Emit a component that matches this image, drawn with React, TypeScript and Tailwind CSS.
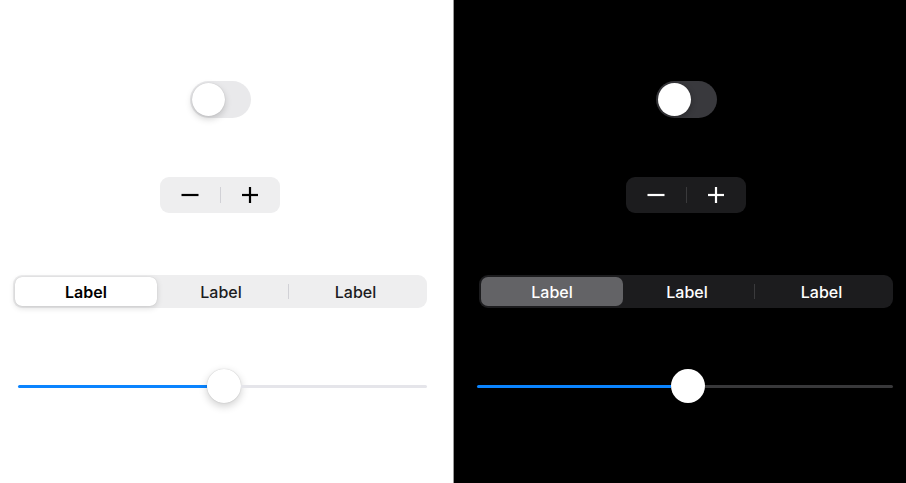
import React from 'react';

type Theme = 'light' | 'dark';

function Toggle({ theme }: { theme: Theme }) {
    const dark = theme === 'dark';
    return (
        <div className={`w-[61px] h-[37px] rounded-full flex items-center px-[2px] ${dark ? 'bg-[#39393d]' : 'bg-[#e9e9eb]'}`}>
            <div
                className={`w-[33px] h-[33px] rounded-full bg-white ${
                    dark ? 'shadow-[0_2px_6px_rgba(0,0,0,0.3)]' : 'shadow-[0_3px_7px_rgba(0,0,0,0.18),0_0_1px_rgba(0,0,0,0.2)]'
                }`}
            />
        </div>
    );
}

function Stepper({ theme }: { theme: Theme }) {
    const dark = theme === 'dark';
    const stroke = dark ? '#ffffff' : '#000000';
    return (
        <div className={`w-[120px] h-[36px] rounded-[9px] flex items-center ${dark ? 'bg-[#1c1c1e]' : 'bg-[#eeeeef]'}`}>
            <div className="flex-1 flex items-center justify-center">
                <svg width="18" height="18" viewBox="0 0 18 18">
                    <line x1="0.5" y1="9" x2="17.5" y2="9" stroke={stroke} strokeWidth="2.2" />
                </svg>
            </div>
            <div className={`w-px h-[16px] ${dark ? 'bg-[#3a3a3c]' : 'bg-[#d1d1d6]'}`} />
            <div className="flex-1 flex items-center justify-center">
                <svg width="18" height="18" viewBox="0 0 18 18">
                    <line x1="1" y1="9" x2="17" y2="9" stroke={stroke} strokeWidth="2.2" />
                    <line x1="9" y1="1" x2="9" y2="17" stroke={stroke} strokeWidth="2.2" />
                </svg>
            </div>
        </div>
    );
}

function Segmented({ theme }: { theme: Theme }) {
    const dark = theme === 'dark';
    const text = dark ? 'text-white' : 'text-[#1c1c1e]';
    return (
        <div className={`w-[414px] h-[33px] rounded-[9px] flex items-center pl-[2px] pr-[5px] ${dark ? 'bg-[#1c1c1e]' : 'bg-[#eeeeef]'}`}>
            <div
                className={`w-[142px] h-[29px] rounded-[7px] flex items-center justify-center text-[16px] ${
                    dark
                        ? 'bg-[#636366] text-white font-medium'
                        : 'bg-white text-black font-semibold shadow-[0_2px_6px_rgba(0,0,0,0.14),0_0_1px_rgba(0,0,0,0.2)]'
                }`}
            >
                Label
            </div>
            <div className={`w-[131px] pr-[3px] flex justify-center text-[16px] font-medium ${text}`}>Label</div>
            <div className={`w-px h-[15px] ${dark ? 'bg-[#3a3a3c]' : 'bg-[#d1d1d6]'}`} />
            <div className={`flex-1 flex justify-center text-[16px] font-medium ${text}`}>Label</div>
        </div>
    );
}

function Slider({ theme }: { theme: Theme }) {
    const dark = theme === 'dark';
    return (
        <div className="w-[414px] h-[34px] flex items-center">
            <div className={`h-[3px] rounded-l-full bg-[#0a84ff] ${dark ? '-ml-[2px] w-[194px]' : 'ml-[5px] w-[189px]'}`} />
            <div
                className={`w-[34px] h-[34px] rounded-full bg-white shrink-0 ${
                    dark ? '' : 'shadow-[0_3px_8px_rgba(0,0,0,0.2),0_0_1px_rgba(0,0,0,0.25)]'
                }`}
            />
            <div className={`flex-1 h-[3px] rounded-r-full ${dark ? 'bg-[#38383a]' : 'bg-[#e5e5ea]'}`} />
        </div>
    );
}

function Panel({ theme }: { theme: Theme }) {
    const dark = theme === 'dark';
    return (
        <div
            className={`w-[453px] h-[483px] flex flex-col items-start pt-[81px] ${
                dark ? 'bg-black border-l border-[#9a9a9a] pl-[25px]' : 'bg-white pl-[13px]'
            }`}
        >
            <div className="w-[414px] flex justify-center">
                <Toggle theme={theme} />
            </div>
            <div className="w-[414px] flex justify-center mt-[59px]">
                <Stepper theme={theme} />
            </div>
            <div className="mt-[62px]">
                <Segmented theme={theme} />
            </div>
            <div className="mt-[61px]">
                <Slider theme={theme} />
            </div>
        </div>
    );
}

export default function App() {
    return (
        <div className="flex w-[906px] h-[483px] overflow-hidden font-['Inter',sans-serif]">
            <Panel theme="light" />
            <Panel theme="dark" />
        </div>
    );
}
